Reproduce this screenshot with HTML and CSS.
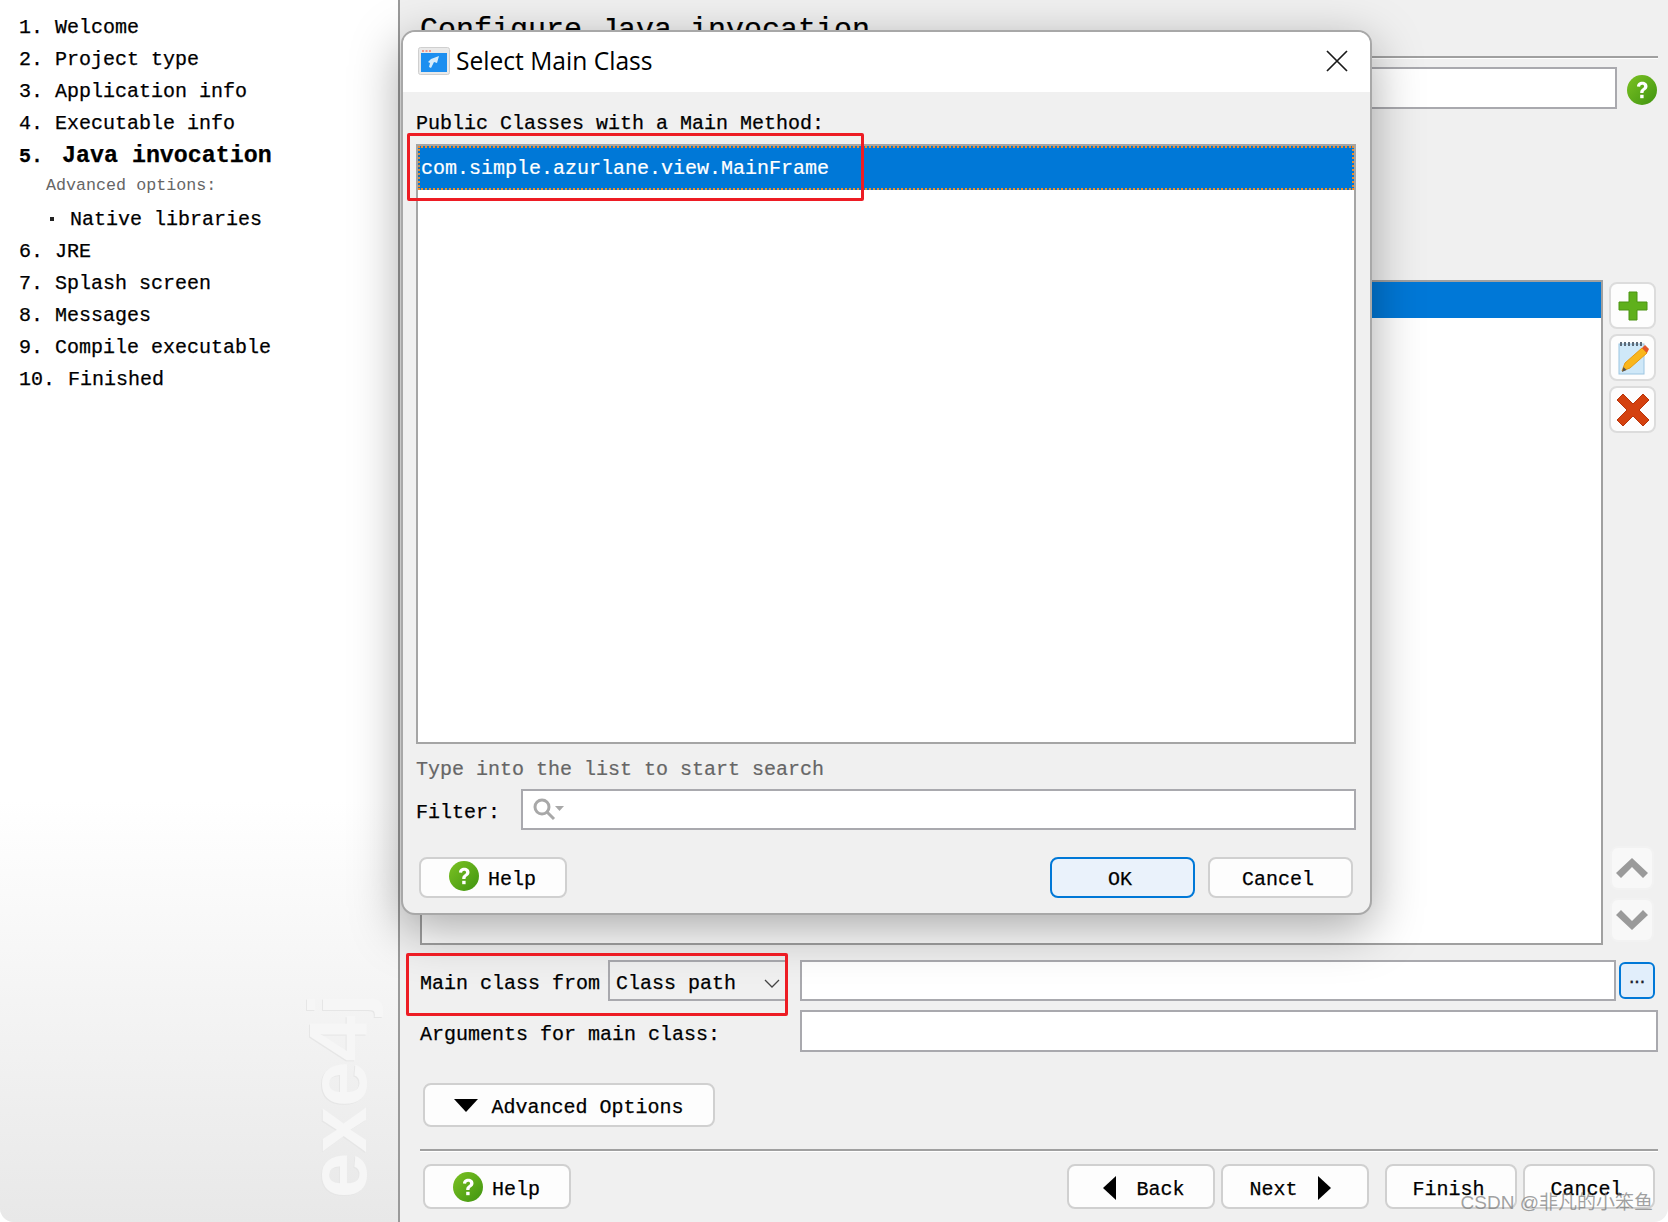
FILE: index.html
```html
<!DOCTYPE html>
<html lang="en">
<head>
<meta charset="utf-8">
<title>exe4j - Select Main Class</title>
<link rel="stylesheet" href="styles.css">
</head>
<body>
<svg class="defs" width="0" height="0" aria-hidden="true">
  <defs>
    <linearGradient id="g" x1="0" y1="0" x2="1" y2="1"><stop offset="0" stop-color="#7cc223"/><stop offset="1" stop-color="#3f9410"/></linearGradient>
    <symbol id="help" viewBox="0 0 32 32">
      <circle cx="16" cy="16" r="15" fill="url(#g)"/>
      <path d="M11 12.5c0-3 2.300-4.800 5.200-4.800 3 0 5.300 1.700 5.300 4.500 0 2-1.100 3-2.500 4-1.200.9-1.500 1.400-1.500 2.800h-3.300c0-2.300.6-3.300 2.200-4.500 1.100-.8 1.700-1.300 1.700-2.200 0-1-.7-1.600-1.900-1.600-1.300 0-2 .8-2.100 2.100z" fill="#fff"/>
      <rect x="14.200" y="20.800" width="3.400" height="3.400" fill="#fff"/>
    </symbol>
  </defs>
</svg>
<div class="window">
  <aside class="sidebar">
    <ol class="steps">
      <li class="step"><span class="num">1.</span>Welcome</li>
      <li class="step"><span class="num">2.</span>Project type</li>
      <li class="step"><span class="num">3.</span>Application info</li>
      <li class="step"><span class="num">4.</span>Executable info</li>
      <li class="step step-current"><span class="num">5.</span>Java invocation</li>
      <li class="step step-note">Advanced options:</li>
      <li class="step step-sub"><span class="bullet"></span>Native libraries</li>
      <li class="step"><span class="num">6.</span>JRE</li>
      <li class="step"><span class="num">7.</span>Splash screen</li>
      <li class="step"><span class="num">8.</span>Messages</li>
      <li class="step"><span class="num">9.</span>Compile executable</li>
      <li class="step step-wide"><span class="num">10.</span>Finished</li>
    </ol>
    <div class="brand">exe4j</div>
  </aside>

  <main class="main">
    <h1 class="title">Configure Java invocation</h1>
    <div class="rule rule-title"></div>
    <div class="vm-row">
      <div class="field field-vm"></div>
      <svg class="help-big"><use href="#help"/></svg>
    </div>

    <div class="list-row">
      <div class="cp-list"><div class="cp-selected"></div></div>
      <div class="side-buttons">
        <button class="tool">
          <svg width="30" height="30" viewBox="0 0 30 30"><path d="M11 1h8v10h10v8H19v10h-8V19H1v-8h10z" fill="#5fb01c" stroke="#4a9412"/></svg>
        </button>
        <button class="tool">
          <svg width="34" height="34" viewBox="0 0 34 34">
            <rect x="3" y="3" width="25" height="30" fill="#cfe8f8" stroke="#9cc6e2"/>
            <path d="M5 1v4M9 1v4M13 1v4M17 1v4M21 1v4M25 1v4" stroke="#5d6b78" stroke-width="2"/>
            <path d="M6 30l3-8L26 7l5 5L14 27z" fill="#f9b61c" stroke="#e79a10"/>
            <path d="M26 7l3-3 4 4-2 4z" fill="#e4562b"/>
            <path d="M6 31l1.500-5 3 3z" fill="#555"/>
          </svg>
        </button>
        <button class="tool">
          <svg width="34" height="34" viewBox="0 0 34 34"><path d="M7 1l10 10L27 1l6 6-10 10 10 10-6 6-10-10L7 33l-6-6 10-10L1 7z" fill="#d4410f" stroke="#b9340a"/></svg>
        </button>
        <div class="side-gap"></div>
        <button class="tool tool-soft">
          <svg width="34" height="24" viewBox="0 0 34 24"><path d="M1 17L17 2l16 15-5 5L17 11 6 22z" fill="#9a9a9a"/></svg>
        </button>
        <button class="tool tool-soft">
          <svg width="34" height="24" viewBox="0 0 34 24"><path d="M1 7l16 15L33 7l-5-5-11 11L6 2z" fill="#9a9a9a"/></svg>
        </button>
      </div>
    </div>

    <div class="form-row form-row-main">
      <span class="label label-main">Main class from</span>
      <div class="combo">Class path
        <svg class="chevron" width="16" height="9" viewBox="0 0 16 9"><path d="M1 1l7 7 7-7" fill="none" stroke="#444" stroke-width="1.300"/></svg>
      </div>
      <div class="field field-main"></div>
      <button class="browse">...</button>
    </div>
    <div class="form-row form-row-args">
      <span class="label label-args">Arguments for main class:</span>
      <div class="field field-args"></div>
    </div>

    <button class="btn btn-advanced"><span class="tri-down"></span>Advanced Options</button>
    <div class="rule rule-bottom"></div>

    <div class="footer">
      <button class="btn btn-help"><svg class="help-small"><use href="#help"/></svg>Help</button>
      <div class="footer-right">
        <button class="btn btn-nav btn-back"><span class="tri-left"></span>Back</button>
        <button class="btn btn-nav btn-next"><span>Next</span><span class="tri-right"></span></button>
        <button class="btn btn-end btn-finish">Finish</button>
        <button class="btn btn-end">Cancel</button>
      </div>
    </div>
  </main>

  <section class="dialog">
    <header class="dialog-head">
      <svg class="app-icon" width="32" height="28" viewBox="0 0 32 28">
        <rect x=".5" y=".5" width="31" height="27" rx="2" fill="#e9e9e9" stroke="#cfcfcf"/>
        <rect x="3" y="6" width="26" height="19" fill="#1d8ff0"/>
        <rect x="4" y="3" width="2" height="2" fill="#f3988a"/><rect x="7.500" y="3" width="2" height="2" fill="#f3988a"/><rect x="11" y="3" width="2" height="2" fill="#f3988a"/>
        <path d="M21 9l-2 7-3-1-3 6-2-1 1-4-2-1 3-3z" fill="#d6ecfb"/>
      </svg>
      <span class="dialog-title">Select Main Class</span>
      <svg class="close" width="22" height="22" viewBox="0 0 22 22"><path d="M1 1l20 20M21 1L1 21" stroke="#1a1a1a" stroke-width="1.700"/></svg>
    </header>
    <div class="dialog-body">
      <div class="label">Public Classes with a Main Method:</div>
      <div class="class-list">
        <div class="class-item">com.simple.azurlane.view.MainFrame</div>
      </div>
      <div class="hint">Type into the list to start search</div>
      <div class="filter-row">
        <span class="label">Filter:</span>
        <div class="field field-filter">
          <svg width="36" height="28" viewBox="0 0 36 28"><circle cx="12" cy="11" r="7" fill="none" stroke="#a8a8a8" stroke-width="3"/><path d="M17 16l7 7" stroke="#a8a8a8" stroke-width="3"/><path d="M25 10h9l-4.500 5z" fill="#a8a8a8"/></svg>
        </div>
      </div>
      <div class="dialog-foot">
        <button class="btn btn-help"><svg class="help-small"><use href="#help"/></svg>Help</button>
        <div class="dialog-actions">
          <button class="btn btn-dlg btn-default">OK</button>
          <button class="btn btn-dlg">Cancel</button>
        </div>
      </div>
    </div>
  </section>

  <div class="mark mark-list"></div>
  <div class="mark mark-combo"></div>
  <div class="watermark">CSDN @非凡的小笨鱼</div>
</div>
</body>
</html>
```

FILE: styles.css
```css
* { box-sizing: border-box; }
html, body { margin: 0; padding: 0; background: #fff; }
body {
  width: 1668px;
  height: 1222px;
  overflow: hidden;
  font-family: "Liberation Mono", "Noto Sans CJK SC", monospace;
  font-size: 20px;
  color: #000;
  -webkit-text-stroke: 0.25px #000;
}
.defs { position: absolute; }

.window {
  position: relative;
  display: flex;
  width: 1668px;
  height: 1222px;
  overflow: hidden;
  border-radius: 0 0 14px 14px;
  background: #f0f0f0;
}

/* Sidebar */
.sidebar {
  position: relative;
  flex: 0 0 400px;
  border-right: 2px solid #9a9a9a;
  background: linear-gradient(#fff 0, #fff 800px, #e8e8e8 1222px);
  padding-top: 11px;
}
.steps { list-style: none; margin: 0; padding: 0 0 0 19px; }
.step { display: flex; align-items: center; height: 32px; white-space: nowrap; }
.num { flex: 0 0 36px; }
.step-wide .num { flex-basis: 49px; }
.step-current { font-weight: 700; font-size: 23.300px; padding-top: 2px; }
.step-current .num { flex-basis: 43px; font-size: 20px; }
.step-note { padding-left: 27px; font-size: 16.700px; color: #666; -webkit-text-stroke: 0; height: 28px; }
.step-sub { padding-left: 31px; margin-top: 4px; }
.bullet { width: 4px; height: 4px; margin-right: 16px; background: #222; }
.brand {
  position: absolute;
  left: 297px;
  top: 993px;
  writing-mode: vertical-rl;
  transform: rotate(180deg);
  font: 700 82px/82px "Liberation Sans", sans-serif;
  color: #f6f6f6;
  text-shadow: -1px -1px 0 #e6e6e6;
  -webkit-text-stroke: 0;
}

/* Main pane */
.main {
  flex: 1;
  display: flex;
  flex-direction: column;
  padding: 0 10px 0 20px;
  min-width: 0;
}
.title {
  margin: 0;
  height: 43px;
  padding-top: 13px;
  font: 400 30px/34px "Liberation Mono", monospace;
  white-space: nowrap;
  overflow: hidden;
}
.rule { height: 3px; background: linear-gradient(#a0a0a0 2px, #fff 2px); }
.rule-title { margin: 13px 0 0 0; }
.vm-row { display: flex; align-items: center; margin-top: 8px; gap: 9px; }
.field { background: #fff; border: 2px solid #a9a9ae; }
.field-vm { width: 1197px; flex: 1; height: 42px; }
.help-big { width: 32px; height: 32px; flex: none; margin-top: 4px; }

.list-row { display: flex; margin-top: 171px; height: 665px; gap: 6px; margin-right: 2px; }
.cp-list { flex: 1; background: #fff; border: 2px solid #a0a0a0; }
.cp-selected { height: 36px; background: #0078d7; }
.side-buttons { display: flex; flex-direction: column; gap: 5px; width: 47px; padding-top: 2px; }
.side-gap { flex: 1; }
.tool {
  width: 47px;
  height: 47px;
  padding: 0;
  display: flex;
  align-items: center;
  justify-content: center;
  background: #fdfdfd;
  border: 2px solid #dcdcdc;
  border-radius: 8px;
}
.tool-soft { height: 44px; border-color: #f2f2f2; background: #f8f8f8; margin-left: 1px; width: 44px; margin-bottom: 3px; }

.form-row { display: flex; align-items: center; }
.form-row-main { margin-top: 15px; height: 41px; }
.form-row-args { margin-top: 9px; height: 42px; }
.label { white-space: nowrap; }
.form-row .label, .filter-row .label { padding-top: 6px; }
.label-main { flex: 0 0 188px; }
.label-args { flex: 0 0 380px; }
.combo {
  position: relative;
  flex: 0 0 180px;
  height: 41px;
  display: flex;
  align-items: center;
  padding: 5px 0 0 6px;
  background: #f0f0f0;
  border: 2px solid #a9a9ae;
}
.chevron { position: absolute; right: 6px; top: 17px; }
.field-main { flex: 1; height: 41px; margin-left: 12px; margin-right: 3px; }
.field-args { flex: 1; height: 42px; }
.browse {
  flex: 0 0 36px;
  height: 37px;
  padding: 0 3px 4px 0;
  font: 700 14px/1 "Liberation Mono", monospace;
  letter-spacing: -3px;
  color: #223;
  background: #e1eefb;
  border: 2px solid #0078d7;
  border-radius: 6px;
  margin-right: 3px;
}

.btn {
  display: inline-flex;
  align-items: center;
  justify-content: center;
  padding: 4px 0 0;
  font-family: inherit;
  font-size: 20px;
  color: #000;
  background: #fdfdfd;
  border: 2px solid #d0d0d0;
  border-radius: 8px;
  -webkit-text-stroke: 0.25px #000;
}
.btn-advanced { align-self: flex-start; width: 292px; height: 44px; margin: 31px 0 0 3px; gap: 13px; }
.tri-down { width: 0; height: 0; border-left: 12px solid transparent; border-right: 12px solid transparent; border-top: 13px solid #000; margin-top: -4px; }
.rule-bottom { margin-top: 22px; }
.footer { display: flex; justify-content: space-between; margin-top: 12px; height: 45px; }
.footer .btn { padding-top: 6px; }
.footer .btn-help { margin-left: 3px; height: 45px; }
.btn-help { width: 148px; height: 41px; gap: 8px; padding-right: 2px; }
.help-small { width: 32px; height: 32px; flex: none; margin-top: -8px; }
.footer .help-small { margin-top: -6px; }
.footer-right { display: flex; gap: 6px; margin-right: 3px; }
.btn-nav { width: 148px; gap: 18px; }
.footer .btn-back { padding-left: 6px; gap: 20px; }
.footer .btn-next { padding-right: 10px; gap: 20px; }
.btn-finish { margin-left: 10px; }
.btn-end { width: 132px; padding-right: 5px; }
.tri-left { width: 0; height: 0; border-top: 12px solid transparent; border-bottom: 12px solid transparent; border-right: 13px solid #000; margin-top: -4px; }
.tri-right { width: 0; height: 0; border-top: 12px solid transparent; border-bottom: 12px solid transparent; border-left: 13px solid #000; margin-top: -4px; }

/* Dialog window */
.dialog {
  position: absolute;
  left: 401px;
  top: 30px;
  width: 971px;
  height: 885px;
  display: flex;
  flex-direction: column;
  background: #f0f0f0;
  border: 2px solid #a8a8a8;
  border-radius: 14px;
  box-shadow: 0 14px 50px rgba(0, 0, 0, 0.34);
  overflow: hidden;
}
.dialog-head {
  flex: 0 0 60px;
  display: flex;
  align-items: center;
  padding: 0 22px 2px 15px;
  background: #fff;
}
.app-icon { flex: none; margin-right: 6px; }
.dialog-title { flex: 1; font: 400 24.600px/1 "Open Sans", sans-serif; color: #000; -webkit-text-stroke: 0; }
.close { flex: none; }
.dialog-body { flex: 1; display: flex; flex-direction: column; padding: 20px 14px 0 13px; }
.class-list { height: 600px; margin-top: 9px; background: #fff; border: 2px solid #a5a5a5; }
.class-item {
  height: 44px;
  padding-left: 3px;
  line-height: 45px;
  color: #fff;
  -webkit-text-stroke: 0.2px #fff;
  background: #0078d7;
  outline: 2px dotted #f28c28;
  outline-offset: -2px;
  white-space: nowrap;
}
.hint { margin-top: 14px; height: 24px; line-height: 24px; color: #666; -webkit-text-stroke: 0.2px #666; white-space: nowrap; }
.filter-row { display: flex; align-items: center; justify-content: space-between; margin-top: 7px; height: 41px; }
.field-filter { width: 835px; height: 41px; display: flex; align-items: center; padding-left: 7px; }
.dialog-foot { display: flex; justify-content: space-between; margin-top: 27px; padding: 0 3px 0 3px; }
.dialog-actions { display: flex; gap: 13px; }
.btn-dlg { width: 145px; height: 41px; padding-right: 5px; }
.btn-default { background: #eaf2fb; border-color: #0078d7; }

/* Annotations drawn over the screenshot */
.mark { position: absolute; border: 3px solid #ed1c24; border-radius: 2px; }
.mark-list { left: 407px; top: 133px; width: 457px; height: 68px; }
.mark-combo { left: 406px; top: 953px; width: 382px; height: 63px; }
.watermark {
  position: absolute;
  right: 15px;
  top: 1191px;
  font: 400 19px/24px "Liberation Sans", "Noto Sans CJK SC", sans-serif;
  color: rgba(120, 120, 120, 0.7);
  -webkit-text-stroke: 0;
  white-space: nowrap;
}
```
